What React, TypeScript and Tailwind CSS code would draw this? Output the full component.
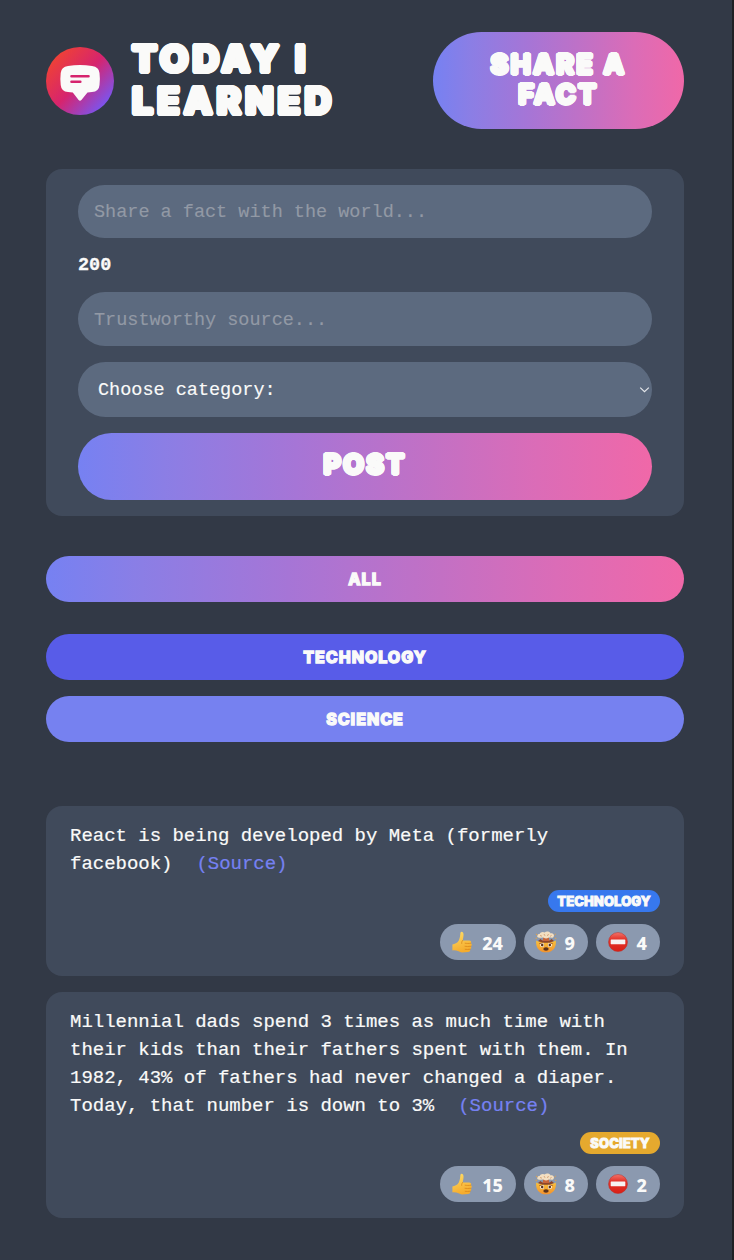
import React from "react";

const ThumbsUp = () => (
  <svg width="22" height="22" viewBox="0 0 22 22" className="shrink-0">
    <defs>
      <linearGradient id="thumb" x1="0" y1="0" x2="0.3" y2="1">
        <stop offset="0" stopColor="#ffdd67" />
        <stop offset="1" stopColor="#f5ac2d" />
      </linearGradient>
    </defs>
    <path d="M1.4 13.4 C3.6 13 6.4 12 7.8 9.4 C9 7 9.2 4.3 9.4 2 C9.8 .2 12.2.5 12.5 3 C12.7 5 12 7.6 11.7 9.4 L18.4 9.4 C20.4 9.6 20.6 11.6 19.8 12.2 C21.3 12.9 21 14.8 19.8 15.3 C20.8 16 20.2 18 19.1 18.3 C19.6 19.8 18.6 20.9 17 21 L11 21.4 C8.5 21.2 6.5 19 1.4 19.4 Z" fill="url(#thumb)" />
    <path d="M19.8 12.2 C17.5 12.6 15.8 12.5 14.1 12.2 M19.8 15.3 C17.5 15.7 15.6 15.5 14 15.3 M19.1 18.3 C17.2 18.6 15.6 18.5 14.2 18.3 M11.7 9.4 C10.8 10.4 10.5 11.4 10.7 12.4" fill="none" stroke="#d98719" strokeWidth="0.8" strokeLinecap="round" />
  </svg>
);

const MindBlown = () => (
  <svg width="22" height="22" viewBox="0 0 22 22" className="shrink-0">
    <defs>
      <linearGradient id="face" x1="0" y1="0" x2="0" y2="1">
        <stop offset="0" stopColor="#f9c23c" />
        <stop offset="1" stopColor="#f3922d" />
      </linearGradient>
    </defs>
    <path d="M1.2 9.4 C4 11.8 18 11.8 20.8 9.4 C21.6 16 18 21.3 11 21.3 C4 21.3 .4 16 1.2 9.4Z" fill="url(#face)" />
    <path d="M3 10 L5.5 8 L7.5 9.8 L9 7 L13 7 L14.5 9.8 L16.5 8 L19 10 C14 12.4 8 12.4 3 10Z" fill="#8f4527" />
    <path d="M8.6 5 H13.4 L14.4 10 H7.6Z" fill="#c9653a" />
    <path d="M3.4 6.6 C1.2 5.6 2.4 2.8 4.6 3 C5.2.8 8.4.4 9.6 1.4 C11.4 0 14.8.5 15.6 2.4 C18.4 1.8 20 4.6 18.3 6.2 C17 7.4 14.6 6 13.4 6.8 C12 7.6 10 7.6 8.8 6.7 C7 6 5 7.4 3.4 6.6Z" fill="#f3dfc1" />
    <path d="M5 4.5 L7 5.2 M9 3 L10 4.8 M13.5 3 L12.4 5 M16.6 4.4 L15 5.4" stroke="#c98b5b" strokeWidth="0.7" />
    <path d="M1 3 l1.4 1 M.7 7.6 l1.3-.5 M20.8 3 l-1.2 1 M21.3 7.6 l-1.4-.5" stroke="#e9a13e" strokeWidth="1" />
    <circle cx="7.1" cy="14.1" r="2" fill="#fff" />
    <circle cx="14.9" cy="14.1" r="2" fill="#fff" />
    <circle cx="7.2" cy="14.1" r="1.3" fill="#5b321b" />
    <circle cx="14.8" cy="14.1" r="1.3" fill="#5b321b" />
    <path d="M4.3 12.6 L7.8 11.8 M17.7 12.6 L14.2 11.8" stroke="#8f4527" strokeWidth="0.8" />
    <ellipse cx="11" cy="18" rx="2.7" ry="1.7" fill="#5b321b" />
  </svg>
);

const NoEntry = () => (
  <svg width="22" height="22" viewBox="0 0 22 22" className="shrink-0">
    <defs>
      <linearGradient id="stop" x1="0" y1="0" x2="0" y2="1">
        <stop offset="0" stopColor="#f2746a" />
        <stop offset="0.35" stopColor="#e3342b" />
        <stop offset="1" stopColor="#d92016" />
      </linearGradient>
    </defs>
    <circle cx="11" cy="11" r="9.5" fill="url(#stop)" stroke="#b92f29" strokeWidth="0.5" />
    <rect x="3.7" y="8.6" width="14.6" height="4.6" rx="0.4" fill="#f7f3f2" />
  </svg>
);

const Logo = () => (
  <svg width="68" height="68" viewBox="0 0 68 68" className="shrink-0">
    <defs>
      <linearGradient id="logo" x1="0.12" y1="0.15" x2="0.88" y2="0.85">
        <stop offset="0" stopColor="#ef4136" />
        <stop offset="0.5" stopColor="#d6246e" />
        <stop offset="1" stopColor="#7a55f0" />
      </linearGradient>
    </defs>
    <circle cx="34" cy="34" r="34" fill="url(#logo)" />
    <path d="M22 19 Q34 17.2 46 19 Q53 19.8 53.5 26 Q54.3 32 53.5 38 Q53 44.5 46 45 L41.5 45.4 L35.4 53 Q34 54.6 32.6 53 L26.8 45.4 L22 45 Q15.3 44.5 14.7 38 Q14 32 14.7 26 Q15.3 19.8 22 19Z" fill="#fafaf9" />
    <path d="M25.5 29.2 H42.5 M25.5 34.7 H34.3" stroke="#d6246e" strokeWidth="2.6" strokeLinecap="round" />
  </svg>
);

const gradient = "bg-[linear-gradient(90deg,#7681f2_0%,#8b7ee5_15%,#a675d6_38%,#c370c4_62%,#db6cb7_80%,#f068a8_100%)]";

const display = "font-[Inter,sans-serif] font-extrabold uppercase text-[#fafaf9]";
// A ring of same-coloured shadows thickens the lettering and rounds off its corners.
const rounded =
  "[text-shadow:0.06em_0_0_#fafaf9,0.052em_0.03em_0_#fafaf9,0.03em_0.052em_0_#fafaf9,0_0.06em_0_#fafaf9,-0.03em_0.052em_0_#fafaf9,-0.052em_0.03em_0_#fafaf9,-0.06em_0_0_#fafaf9,-0.052em_-0.03em_0_#fafaf9,-0.03em_-0.052em_0_#fafaf9,0_-0.06em_0_#fafaf9,0.03em_-0.052em_0_#fafaf9,0.052em_-0.03em_0_#fafaf9]";
const mono = "font-['Liberation_Mono',monospace]";
const field = "text-[18.5px] [-webkit-text-stroke-width:0.15px]";
const filter = "h-[46px] rounded-full pt-px uppercase tracking-[1px]";

type Fact = { lines: string[]; category: string; color: string; tagWidth: string; votes: number[] };

const facts: Fact[] = [
  {
    lines: ["React is being developed by Meta (formerly", "facebook)"],
    category: "Technology",
    color: "bg-[#3778ee]",
    tagWidth: "w-[112px]",
    votes: [24, 9, 4],
  },
  {
    lines: [
      "Millennial dads spend 3 times as much time with",
      "their kids than their fathers spent with them. In",
      "1982, 43% of fathers had never changed a diaper.",
      "Today, that number is down to 3%",
    ],
    category: "Society",
    color: "bg-[#e5a92e]",
    tagWidth: "w-[80px]",
    votes: [15, 8, 2],
  },
];

const voteIcons = [ThumbsUp, MindBlown, NoEntry];

function FactCard({ fact }: { fact: Fact }) {
  return (
    <li className="flex flex-col rounded-2xl bg-[#404a5b] px-6 pb-4 pt-4">
      <p className={`${mono} whitespace-pre text-[19px] leading-7 tracking-[-0.02px] text-[#fafaf9] [-webkit-text-stroke-width:0.2px]`}>
        {fact.lines.map((line, i) => (
          <span key={line} className="block">
            {line}
            {i === fact.lines.length - 1 && <a className="ml-6 text-[#7681f2]">(Source)</a>}
          </span>
        ))}
      </p>
      <div className="mt-3 flex justify-end">
        <span className={`${display} ${fact.color} ${fact.tagWidth} flex h-[22px] items-center justify-center rounded-full pt-px text-[13px] tracking-[0.1px] [-webkit-text-stroke:1px_#fafaf9]`}>
          {fact.category}
        </span>
      </div>
      <div className="mt-3 flex justify-end gap-2">
        {fact.votes.map((count, i) => {
          const Icon = voteIcons[i];
          return (
            <button
              key={i}
              className={`${i === 0 ? "w-[76px]" : "w-16"} flex h-9 items-center justify-between rounded-full bg-[#8b99af] pl-[11px] pr-[13px] font-['Noto_Sans',sans-serif] text-[18px] font-extrabold text-[#fafaf9]`}
            >
              <Icon />
              <span className="mt-px leading-none">{count}</span>
            </button>
          );
        })}
      </div>
    </li>
  );
}

export default function App() {
  return (
    <div className="flex h-[1260px] w-[734px] overflow-hidden border-r-2 border-[#1f2024] bg-[#323946] pl-[46px] pr-12 pt-8">
      <div className="w-[638px]">
        <header className="flex h-[97px] items-center justify-between">
          <div className="flex items-center gap-[18px]">
            <Logo />
            <h1 className={`${display} ${rounded} flex flex-col whitespace-nowrap pb-[2px] text-[37px] leading-[42px]`}>
              <span className="tracking-[4px]">Today I</span>
              <span className="tracking-[4.2px]">Learned</span>
            </h1>
          </div>
          <button className={`${display} ${rounded} ${gradient} h-[97px] w-[251px] rounded-full pb-[2px] text-[27px] leading-[30px] tracking-[2.3px]`}>
            <span className="block">Share a</span>
            <span className="block">Fact</span>
          </button>
        </header>

        <form className="mt-10 flex h-[347px] flex-col rounded-2xl bg-[#404a5b] px-8 py-4">
          <input
            className={`${mono} ${field} h-[53px] rounded-full bg-[#5c6a7f] px-4 pt-[2px] placeholder:text-[#9299a5]`}
            placeholder="Share a fact with the world..."
          />
          <span className={`${mono} flex h-[54px] items-center pt-[2px] text-[18.5px] font-bold text-[#fafaf9] [-webkit-text-stroke-width:0.3px]`}>200</span>
          <input
            className={`${mono} ${field} h-[54px] rounded-full bg-[#5c6a7f] px-4 pt-[2px] placeholder:text-[#9299a5]`}
            placeholder="Trustworthy source..."
          />
          <div className={`${mono} ${field} mt-4 flex h-[55px] items-center justify-between rounded-full bg-[#5c6a7f] pl-5 pr-[2px] text-[#fafaf9]`}>
            <span className="pt-[2px]">Choose category:</span>
            <svg width="11" height="8" viewBox="0 0 11 8" fill="none" stroke="#e5e7eb" strokeWidth="1.2">
              <path d="M1.2 1.6 L5.5 5.6 L9.8 1.6" />
            </svg>
          </div>
          <button type="button" className={`${display} ${rounded} ${gradient} mt-4 h-[67px] rounded-full pb-[2px] text-[27px] tracking-[2.2px]`}>
            Post
          </button>
        </form>

        <nav className={`${display} mt-10 flex flex-col gap-4 text-center text-[16px] leading-[45px] [-webkit-text-stroke:1.3px_#fafaf9]`}>
          <button className={`${filter} ${gradient} mb-4`}>All</button>
          <button className={`${filter} bg-[#585ce8]`}>Technology</button>
          <button className={`${filter} bg-[#7681f0]`}>Science</button>
        </nav>

        <ul className="mt-16 flex flex-col gap-4">
          {facts.map((fact) => (
            <FactCard key={fact.category} fact={fact} />
          ))}
        </ul>
      </div>
    </div>
  );
}
